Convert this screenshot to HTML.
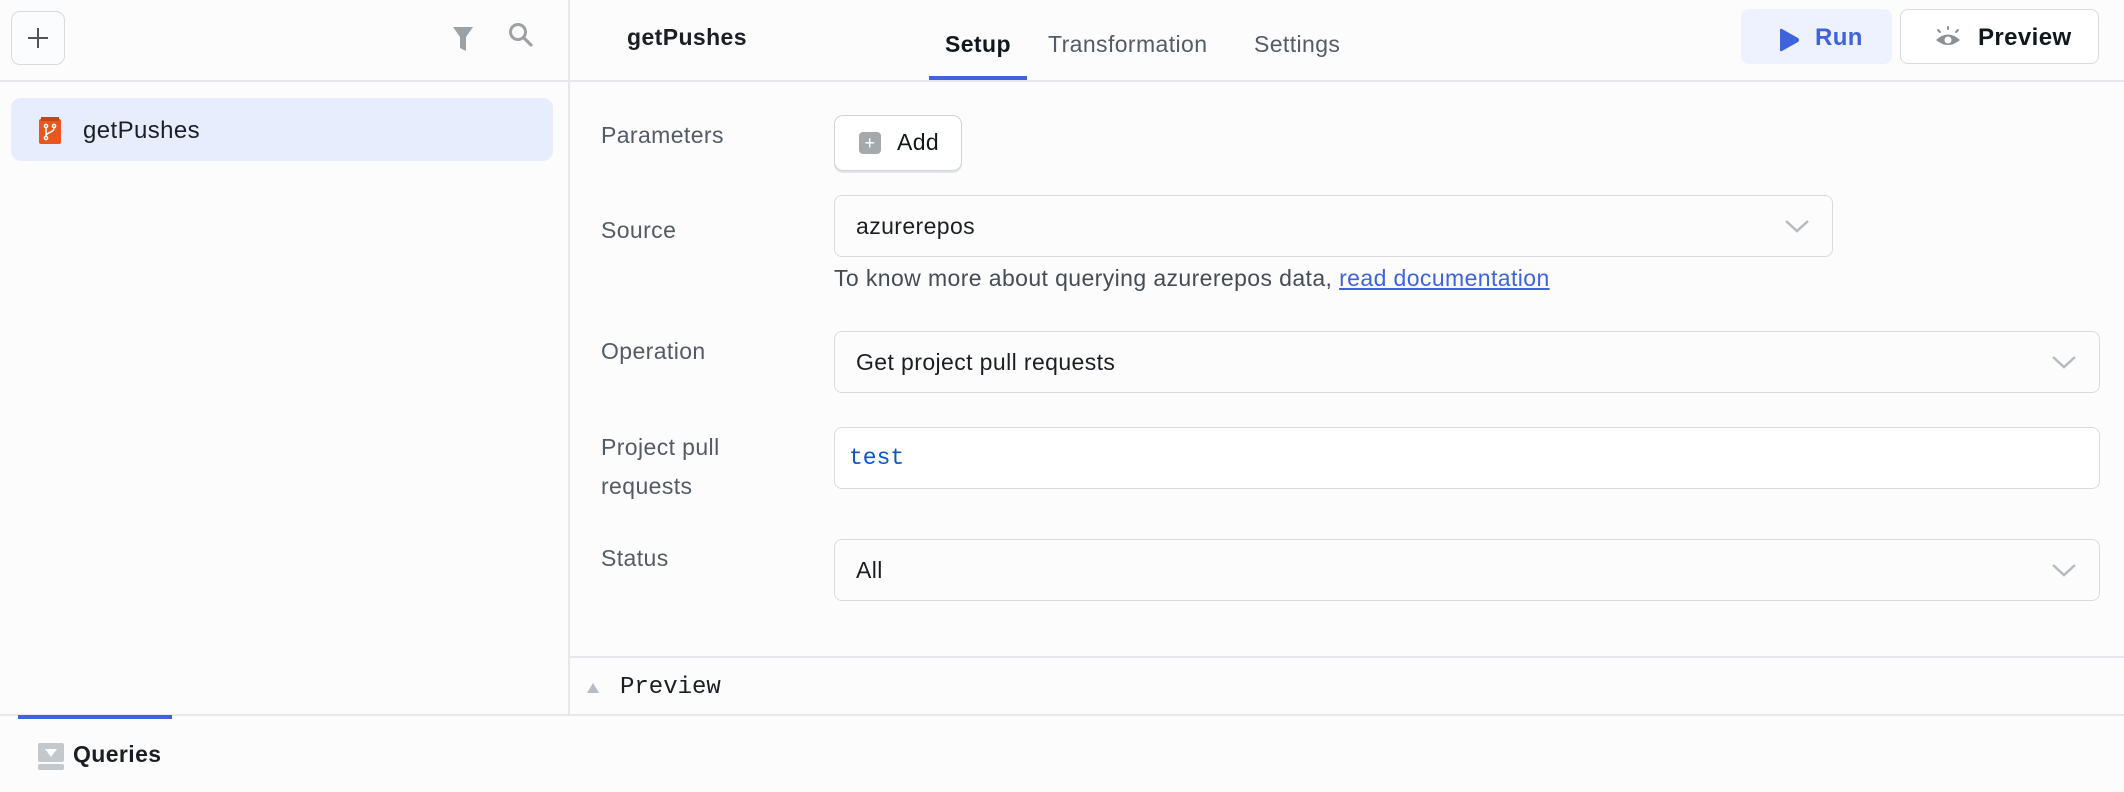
<!DOCTYPE html>
<html><head><style>
*{box-sizing:border-box;margin:0;padding:0}
body{width:2124px;height:792px;background:#fcfcfd;font-family:"Liberation Sans",sans-serif;color:#1b1f24;position:relative;overflow:hidden;letter-spacing:0.4px}
.a{position:absolute}
.lbl{position:absolute;left:601px;font-size:23px;color:#545b64;line-height:28px}
.field{position:absolute;left:834px;border:1.5px solid #d7dbe0;border-radius:8px;background:#fcfcfd;font-size:23px;padding-left:21px;display:flex;align-items:center}
.chev{position:absolute;right:22px;top:50%;margin-top:-8px}
</style></head><body>
<div class="a" style="left:568px;top:0;width:2px;height:716px;background:#e6e8eb"></div>
<div class="a" style="left:0;top:80px;width:2124px;height:2px;background:#e6e8eb"></div>
<div class="a" style="left:570px;top:656px;width:1554px;height:2px;background:#e6e8eb"></div>
<div class="a" style="left:0;top:714px;width:2124px;height:2px;background:#e6e8eb"></div>
<div class="a" style="left:18px;top:715px;width:154px;height:4px;background:#3e63dd"></div>

<div class="a" style="left:11px;top:11px;width:54px;height:54px;border:1.5px solid #d7dbe0;border-radius:9px;background:#fbfcfd"></div>
<div class="a" style="left:28px;top:37px;width:20px;height:2px;background:#555"></div>
<div class="a" style="left:37px;top:28px;width:2px;height:20px;background:#555"></div>
<svg class="a" style="left:452px;top:26px" width="22" height="26" viewBox="0 0 22 26"><path d="M1 1h20l-7 10v14l-6-3V11z" fill="#9ca1a6"/></svg>
<svg class="a" style="left:508px;top:22px" width="26" height="26" viewBox="0 0 26 26"><circle cx="10" cy="10" r="7.5" fill="none" stroke="#9ca1a6" stroke-width="3"/><path d="M16 16l7 7" stroke="#9ca1a6" stroke-width="3.2" stroke-linecap="round"/></svg>

<div class="a" style="left:11px;top:98px;width:542px;height:63px;background:#e7edfd;border-radius:10px"></div>
<svg class="a" style="left:38px;top:117px" width="24" height="28" viewBox="0 0 24 28"><rect x="1" y="2" width="22" height="25" rx="2" fill="#e6581e"/><rect x="3" y="0" width="18" height="4" fill="#c64515"/><g stroke="#fff" stroke-width="1.5" fill="none"><circle cx="8" cy="9" r="1.6"/><circle cx="16" cy="9" r="1.6"/><circle cx="8" cy="21" r="1.6"/><path d="M8 11v8M16 11c0 5-8 4-8 8"/></g></svg>
<div class="a" style="left:83px;top:117px;font-size:24px;line-height:28px;color:#1b1f24">getPushes</div>

<div class="a" style="left:627px;top:24px;font-size:23px;font-weight:bold;color:#1b1f24">getPushes</div>
<div class="a" style="left:945px;top:31px;font-size:23px;font-weight:bold;color:#11181c">Setup</div>
<div class="a" style="left:1048px;top:31px;font-size:23px;color:#545b64">Transformation</div>
<div class="a" style="left:1254px;top:31px;font-size:23px;color:#545b64">Settings</div>
<div class="a" style="left:929px;top:76px;width:98px;height:4px;background:#3e63dd"></div>

<div class="a" style="left:1741px;top:9px;width:151px;height:55px;background:#edf2fe;border-radius:8px"></div>
<svg class="a" style="left:1778px;top:28px" width="22" height="24" viewBox="0 0 22 24"><path d="M2 2Q2 0 4 1L20 10Q22 12 20 14L4 23Q2 24 2 22Z" fill="#3e63dd"/></svg>
<div class="a" style="left:1815px;top:24px;font-size:24px;font-weight:bold;color:#3e63dd">Run</div>
<div class="a" style="left:1900px;top:9px;width:199px;height:55px;border:1.5px solid #d7dbe0;border-radius:8px;background:#fff"></div>
<svg class="a" style="left:1935px;top:26px" width="26" height="22" viewBox="0 0 26 22"><g stroke="#8b9095" stroke-width="2" stroke-linecap="round"><path d="M3 4l2 2M13 1v2M23 4l-2 2"/></g><path d="M1 14Q13 3 25 14Q13 24 1 14Z" fill="#8b9095"/><circle cx="13" cy="14" r="3.5" fill="#fff"/></svg>
<div class="a" style="left:1978px;top:24px;font-size:24px;font-weight:bold;color:#11181c">Preview</div>

<div class="lbl" style="top:121px">Parameters</div>
<div class="a" style="left:834px;top:115px;width:128px;height:56px;border:1.5px solid #d0d4d9;border-radius:9px;background:#fff;box-shadow:0 2px 0 #e3e5e8"></div>
<div class="a" style="left:859px;top:132px;width:22px;height:22px;background:#a4a9ae;border-radius:4px;color:#fff;font-size:18px;line-height:22px;text-align:center">+</div>
<div class="a" style="left:897px;top:129px;font-size:23px;color:#11181c">Add</div>

<div class="lbl" style="top:216px">Source</div>
<div class="field" style="top:195px;width:999px;height:62px">azurerepos<svg class="chev" width="26" height="16" viewBox="0 0 26 16"><path d="M2 3l11 10 11-10" fill="none" stroke="#b6bbc0" stroke-width="2.5"/></svg></div>
<div class="a" style="left:834px;top:265px;font-size:23px;color:#454c54">To know more about querying azurerepos data, <span style="color:#3e63dd;text-decoration:underline">read documentation</span></div>

<div class="lbl" style="top:337px">Operation</div>
<div class="field" style="top:331px;width:1266px;height:62px">Get project pull requests<svg class="chev" width="26" height="16" viewBox="0 0 26 16"><path d="M2 3l11 10 11-10" fill="none" stroke="#b6bbc0" stroke-width="2.5"/></svg></div>

<div class="lbl" style="top:433px">Project pull</div>
<div class="lbl" style="top:472px">requests</div>
<div class="field" style="top:427px;width:1266px;height:62px;padding-left:14px;font-family:'Liberation Mono',monospace;color:#0b57c9;font-size:23px;background:#fff;letter-spacing:0">test</div>

<div class="lbl" style="top:544px">Status</div>
<div class="field" style="top:539px;width:1266px;height:62px">All<svg class="chev" width="26" height="16" viewBox="0 0 26 16"><path d="M2 3l11 10 11-10" fill="none" stroke="#b6bbc0" stroke-width="2.5"/></svg></div>

<svg class="a" style="left:586px;top:682px" width="14" height="12"><path d="M7 1l6 10H1z" fill="#b6bcc1"/></svg>
<div class="a" style="left:620px;top:674px;font-family:'Liberation Mono',monospace;font-size:24px;color:#1b1f24;letter-spacing:0">Preview</div>

<svg class="a" style="left:38px;top:743px" width="26" height="27" viewBox="0 0 26 27"><rect x="0" y="0" width="26" height="19" rx="2" fill="#c3c8cc"/><rect x="0" y="21" width="26" height="6" rx="2" fill="#c3c8cc"/><path d="M7 6h12l-6 8z" fill="#fff"/></svg>
<div class="a" style="left:73px;top:741px;font-size:23px;font-weight:bold;color:#1b1f24">Queries</div>
</body></html>
